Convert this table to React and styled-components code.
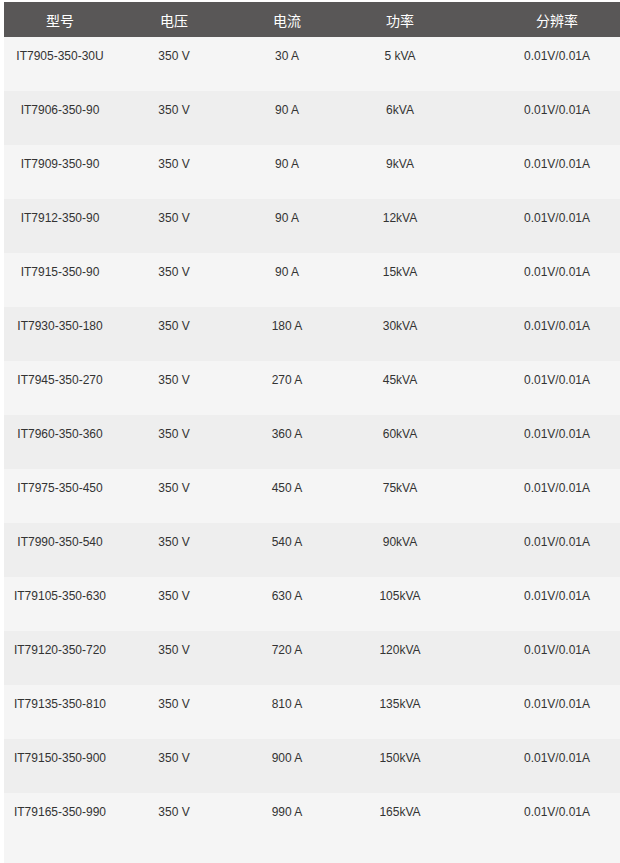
import React from "react";
import styled, { createGlobalStyle } from "styled-components";

const Global = createGlobalStyle`
  html, body { margin: 0; padding: 0; background: #ffffff; }
  body { font-family: "Liberation Sans", Arial, "Noto Sans CJK SC", sans-serif; overflow: hidden; }
`;

const Page = styled.div`
  padding: 2px 0 0 4px;
  width: 616px;
  overflow: hidden;
`;

const Table = styled.div`
  width: 652px;
  background: #f5f5f5;
  min-height: 861px;
`;

const cols = "112px 116px 110px 116px 198px";

const HeadRow = styled.div`
  display: grid;
  grid-template-columns: ${cols};
  height: 35px;
  background: #595757;
  align-items: center;
`;

const HeadCell = styled.div`
  text-align: center;
  color: #ffffff;
  font-size: 14px;
  font-family: "Noto Sans CJK SC", "Liberation Sans", sans-serif;
  line-height: 16px;
`;

const Row = styled.div`
  display: grid;
  grid-template-columns: ${cols};
  height: 54px;
  background: ${(p) => (p.$alt ? "#eeeeee" : "#f5f5f5")};
  align-items: start;
`;

const Cell = styled.div`
  text-align: center;
  color: #333333;
  font-size: 12px;
  line-height: 14px;
  padding-top: 12px;
`;

const rows = [
  ["IT7905-350-30U", "350 V", "30 A", "5 kVA"],
  ["IT7906-350-90", "350 V", "90 A", "6kVA"],
  ["IT7909-350-90", "350 V", "90 A", "9kVA"],
  ["IT7912-350-90", "350 V", "90 A", "12kVA"],
  ["IT7915-350-90", "350 V", "90 A", "15kVA"],
  ["IT7930-350-180", "350 V", "180 A", "30kVA"],
  ["IT7945-350-270", "350 V", "270 A", "45kVA"],
  ["IT7960-350-360", "350 V", "360 A", "60kVA"],
  ["IT7975-350-450", "350 V", "450 A", "75kVA"],
  ["IT7990-350-540", "350 V", "540 A", "90kVA"],
  ["IT79105-350-630", "350 V", "630 A", "105kVA"],
  ["IT79120-350-720", "350 V", "720 A", "120kVA"],
  ["IT79135-350-810", "350 V", "810 A", "135kVA"],
  ["IT79150-350-900", "350 V", "900 A", "150kVA"],
  ["IT79165-350-990", "350 V", "990 A", "165kVA"],
];

export default function App() {
  return (
    <>
      <Global />
      <Page>
        <Table>
          <HeadRow>
            <HeadCell>型号</HeadCell>
            <HeadCell>电压</HeadCell>
            <HeadCell>电流</HeadCell>
            <HeadCell>功率</HeadCell>
            <HeadCell>分辨率</HeadCell>
          </HeadRow>
          {rows.map((r, i) => (
            <Row key={r[0]} $alt={i % 2 === 1}>
              <Cell>{r[0]}</Cell>
              <Cell>{r[1]}</Cell>
              <Cell>{r[2]}</Cell>
              <Cell>{r[3]}</Cell>
              <Cell>0.01V/0.01A</Cell>
            </Row>
          ))}
        </Table>
      </Page>
    </>
  );
}
